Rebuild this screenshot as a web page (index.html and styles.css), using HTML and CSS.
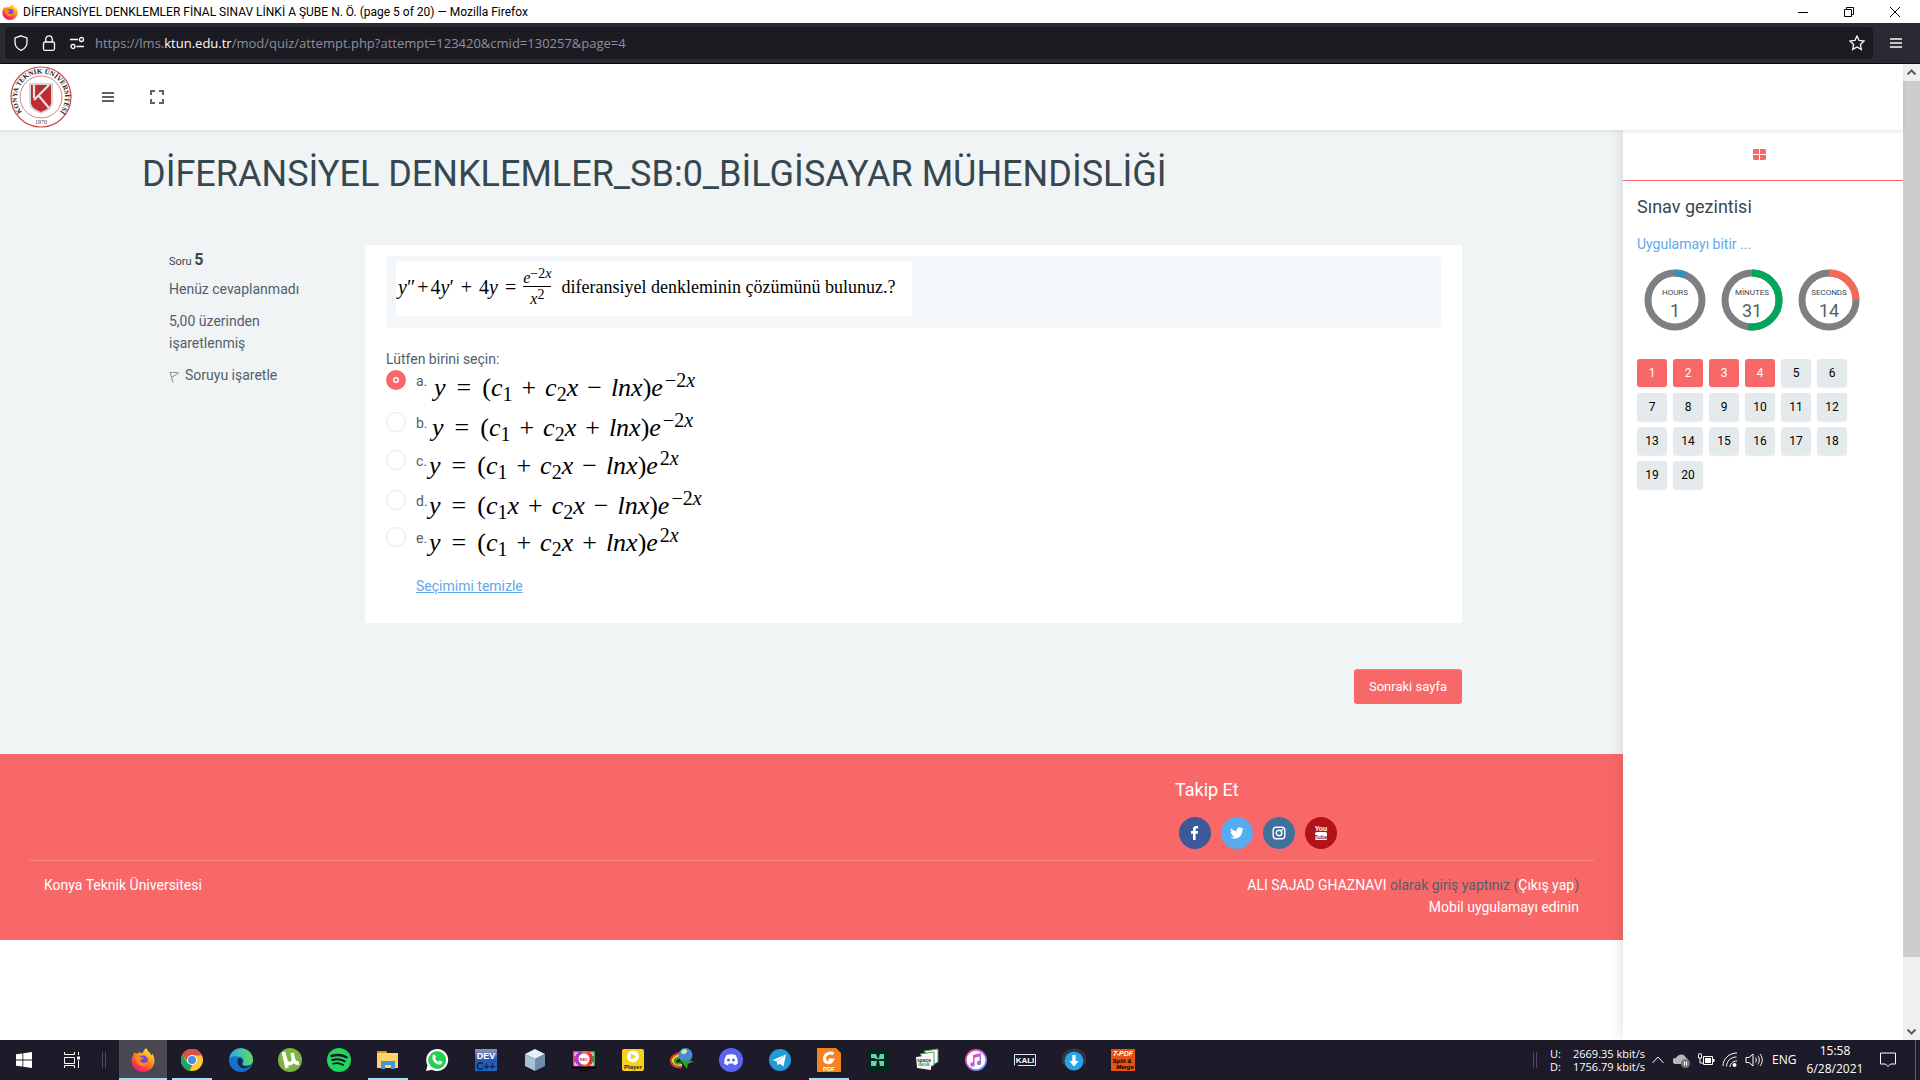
FILE: index.html
```html
<!DOCTYPE html>
<html lang="tr">
<head>
<meta charset="utf-8">
<title>DİFERANSİYEL DENKLEMLER FİNAL SINAV LİNKİ A ŞUBE N. Ö. (page 5 of 20)</title>
<link rel="stylesheet" href="styles.css">
</head>
<body>
<svg width="0" height="0" class="defs" aria-hidden="true">
  <defs>
    <linearGradient id="fox" x1="0.8" y1="0" x2="0.2" y2="1"><stop offset="0" stop-color="#fff44f"/><stop offset="0.4" stop-color="#ff980e"/><stop offset="0.75" stop-color="#ff3750"/><stop offset="1" stop-color="#e31587"/></linearGradient>
    <linearGradient id="edgeA" x1="0" y1="0" x2="1" y2="0"><stop offset="0" stop-color="#2aa9e8"/><stop offset="1" stop-color="#5fdc5a"/></linearGradient>
    <linearGradient id="tunes" x1="0" y1="0" x2="1" y2="1"><stop offset="0" stop-color="#f94a6e"/><stop offset="0.5" stop-color="#c25ae0"/><stop offset="1" stop-color="#2fb3f5"/></linearGradient>
    <linearGradient id="rec" x1="0" y1="0" x2="1" y2="0"><stop offset="0" stop-color="#f23a8c"/><stop offset="0.3" stop-color="#8a3fe0"/><stop offset="0.55" stop-color="#ff7a1a"/><stop offset="0.8" stop-color="#e8272f"/><stop offset="1" stop-color="#17b26a"/></linearGradient>
    <linearGradient id="dev" x1="0" y1="0" x2="0" y2="1"><stop offset="0" stop-color="#8b95b8"/><stop offset="0.5" stop-color="#2b57ae"/><stop offset="1" stop-color="#1766c9"/></linearGradient>
    <symbol id="firefox" viewBox="0 0 24 24">
      <path fill="url(#fox)" d="M2 8c.3-2 1-3 2-4 .2 1 .6 1.600 1.300 2C6.500 5 7.500 4.500 8.500 4.500c1 0 2.500.2 3.500.5 0-2 1.500-3.800 3.500-5 .3 2 1.500 3 3 4.500 1 1 1.500 2 1.800 3 .6-.4.900-1 1-1.700C22.600 8 23.500 10 23.500 12.800 23.500 19 18.500 24 12 24S.5 19 .5 12.800C.5 11 1 9.300 2 8z"/>
      <circle cx="12" cy="12.500" r="5" fill="#7542e5"/>
      <path fill="#ff8a16" d="M4 9c2-1 4.500-.5 5.500.5h3c0 1.500-2 2-3 2.500-.5 1.500 1 3.200 3.500 3 2-.2 3-1.500 4-1.300-.5 3-3 4.300-5.500 4.300C7 18 4 14 4 9z"/>
    </symbol>
  </defs>
</svg>

<header class="titlebar">
  <svg class="titlebar-logo" viewBox="0 0 24 24"><use href="#firefox"/></svg>
  <span class="titlebar-text">DİFERANSİYEL DENKLEMLER FİNAL SINAV LİNKİ A ŞUBE N. Ö. (page 5 of 20) — Mozilla Firefox</span>
  <button class="win-btn" aria-label="Minimize"><svg viewBox="0 0 10 10"><path d="M0 5.500h10"/></svg></button>
  <button class="win-btn" aria-label="Restore"><svg viewBox="0 0 10 10"><path d="M.5 2.500h7v7h-7zM2.500 2.500v-2h7v7h-2"/></svg></button>
  <button class="win-btn" aria-label="Close"><svg viewBox="0 0 10 10"><path d="M0 0l10 10M10 0L0 10"/></svg></button>
</header>

<div class="toolbar">
  <div class="address">
    <svg class="addr-icon" viewBox="0 0 16 16"><path d="M8 .8L14 3v4c0 4-2.500 7-6 8.400C4.500 14 2 11 2 7V3z"/></svg>
    <svg class="addr-icon" viewBox="0 0 16 16"><rect x="2.500" y="7" width="11" height="8.300" rx="1.500"/><path d="M4.800 7V4a3.200 3.200 0 0 1 6.400 0v3"/></svg>
    <svg class="addr-icon" viewBox="0 0 16 16"><path d="M1 4.500h8M7.500 11.500H15"/><circle cx="12.500" cy="4.500" r="2"/><circle cx="4" cy="11.500" r="2"/></svg>
    <div class="url" role="textbox" aria-label="Address">https://lms.<span class="url-host">ktun.edu.tr</span>/mod/quiz/attempt.php?attempt=123420&amp;cmid=130257&amp;page=4</div>
    <button class="tool-btn" aria-label="Bookmark"><svg viewBox="0 0 16 16"><path d="M8 1l2.100 4.500 4.900.6-3.600 3.400.9 4.900L8 12l-4.300 2.400.9-4.900L1 6.100l4.900-.6z"/></svg></button>
  </div>
  <button class="tool-btn menu-btn" aria-label="Menu"><svg viewBox="0 0 14 14"><path d="M1 3h12M1 7h12M1 11h12"/></svg></button>
</div>

<div class="viewport">
  <div class="page">
    <nav class="site-nav">
      <a href="#" class="brand" aria-label="Konya Teknik Üniversitesi">
        <svg viewBox="0 0 62 62">
          <circle cx="31" cy="31" r="30" fill="#fff" stroke="#cf4a4c" stroke-width="1.200"/>
          <circle cx="31" cy="31" r="21" fill="none" stroke="#d98284" stroke-width="1"/>
          <path id="ring" fill="none" d="M17 51A24 24 0 1 1 45 51"/>
          <text class="brand-ring"><textPath href="#ring" startOffset="50%" text-anchor="middle">KONYA TEKNİK ÜNİVERSİTESİ</textPath></text>
          <text class="brand-year" x="31" y="58" text-anchor="middle">1970</text>
          <path fill="#d5d5d7" d="M19 17h24v19c0 6-5 9-12 12-7-3-12-6-12-12z"/>
          <path fill="#bf2c30" d="M21 19h20v17c0 5-4 7.500-10 10-6-2.500-10-5-10-10z"/>
          <path fill="none" stroke="#e6e3e4" stroke-width="2.200" d="M39 19L24 34M24 19v13M29 30l10 12"/>
        </svg>
      </a>
      <button class="nav-btn" aria-label="Menü"><svg viewBox="0 0 14 14"><path d="M1 3h12M1 7h12M1 11h12"/></svg></button>
      <button class="nav-btn" aria-label="Tam ekran"><svg viewBox="0 0 14 14"><path d="M1 5V1h4M9 1h4v4M13 9v4H9M5 13H1V9"/></svg></button>
    </nav>

    <div class="columns">
      <div class="main">
        <main class="content">
          <h1>DİFERANSİYEL DENKLEMLER_SB:0_BİLGİSAYAR MÜHENDİSLİĞİ</h1>
          <div class="question">
            <aside class="info">
              <h2>Soru <b>5</b></h2>
              <p>Henüz cevaplanmadı</p>
              <p>5,00 üzerinden işaretlenmiş</p>
              <p><a href="#" class="flag"><svg viewBox="0 0 10 12"><path d="M1 1l3 10.500M1 1c2 1.500 3-.5 8.500 1L4 5.500 2.500 6"/></svg>Soruyu işaretle</a></p>
            </aside>
            <form class="card">
              <div class="prompt">
                <div class="prompt-math">
                  <span><i>y</i>″<span class="plus">+</span>4<i>y</i>′</span><span>+</span><span>4<i>y</i></span><span>=</span>
                  <span class="frac"><span class="frac-top"><i>e</i><sup>−2<i>x</i></sup></span><span class="frac-bottom"><i>x</i><sup>2</sup></span></span>
                  <span class="prompt-text">diferansiyel denkleminin çözümünü bulunuz.?</span>
                </div>
              </div>
              <fieldset>
                <legend>Lütfen birini seçin:</legend>
                <label class="choice choice-a"><input type="radio" name="q5" checked><span class="letter">a.</span><span class="math"><i>y</i><span class="eq">=</span>(<i>c</i><sub>1</sub><span class="op">+</span><i>c</i><sub>2</sub><i>x</i><span class="op">−</span><i>lnx</i>)<i>e</i><sup>−2<i>x</i></sup></span></label>
                <label class="choice choice-b"><input type="radio" name="q5"><span class="letter">b.</span><span class="math"><i>y</i><span class="eq">=</span>(<i>c</i><sub>1</sub><span class="op">+</span><i>c</i><sub>2</sub><i>x</i><span class="op">+</span><i>lnx</i>)<i>e</i><sup>−2<i>x</i></sup></span></label>
                <label class="choice choice-c"><input type="radio" name="q5"><span class="letter">c.</span><span class="math"><i>y</i><span class="eq">=</span>(<i>c</i><sub>1</sub><span class="op">+</span><i>c</i><sub>2</sub><i>x</i><span class="op">−</span><i>lnx</i>)<i>e</i><sup>2<i>x</i></sup></span></label>
                <label class="choice choice-d"><input type="radio" name="q5"><span class="letter">d.</span><span class="math"><i>y</i><span class="eq">=</span>(<i>c</i><sub>1</sub><i>x</i><span class="op">+</span><i>c</i><sub>2</sub><i>x</i><span class="op">−</span><i>lnx</i>)<i>e</i><sup>−2<i>x</i></sup></span></label>
                <label class="choice choice-e"><input type="radio" name="q5"><span class="letter">e.</span><span class="math"><i>y</i><span class="eq">=</span>(<i>c</i><sub>1</sub><span class="op">+</span><i>c</i><sub>2</sub><i>x</i><span class="op">+</span><i>lnx</i>)<i>e</i><sup>2<i>x</i></sup></span></label>
              </fieldset>
              <a href="#" class="clear">Seçimimi temizle</a>
            </form>
          </div>
          <div class="actions"><button class="next">Sonraki sayfa</button></div>
        </main>

        <footer class="footer">
          <div class="follow">
            <h3>Takip Et</h3>
            <div class="socials">
              <a href="#" class="social facebook" aria-label="Facebook"><svg viewBox="0 0 16 16"><path fill="#fff" d="M6 15V8.700H4V6h2V4.200C6 2.200 7.200 1 9.200 1c.9 0 1.700.1 1.900.1v2.300H9.800c-1 0-1.200.5-1.200 1.200V6h2.400l-.3 2.700H8.600V15z"/></svg></a>
              <a href="#" class="social twitter" aria-label="Twitter"><svg viewBox="0 0 16 16"><path fill="#fff" d="M14.700 3.800c-.4.600-.8 1.100-1.400 1.500.2 4.500-3.200 8.500-7.800 8.500-1.600 0-3-.5-4.200-1.200 1.500.1 2.900-.3 4-1.200-1.200 0-2.200-.8-2.600-1.900h1.200C2.500 9.200 1.600 8 1.600 6.700c.4.200.8.300 1.200.3C1.600 6.200 1.200 4.600 2 3.300c1.400 1.700 3.400 2.700 5.700 2.900C7.200 4 8.700 2.300 10.500 2.300c.8 0 1.500.3 2 .9.600-.1 1.200-.4 1.700-.7-.2.600-.6 1.200-1.200 1.500.6 0 1.100-.1 1.700-.2z"/></svg></a>
              <a href="#" class="social instagram" aria-label="Instagram"><svg viewBox="0 0 16 16"><g fill="none" stroke="#fff" stroke-width="1.400"><rect x="2.200" y="2.200" width="11.600" height="11.600" rx="3"/><circle cx="8" cy="8" r="2.800"/></g><circle cx="11.300" cy="4.700" r=".9" fill="#fff"/></svg></a>
              <a href="#" class="social youtube" aria-label="YouTube"><svg viewBox="0 0 16 16"><rect x="2" y="7" width="12" height="8" rx="1.500" fill="#fff"/><text class="yt-top" x="8" y="6" text-anchor="middle">You</text><text class="yt-bottom" x="8" y="13.500" text-anchor="middle">Tube</text></svg></a>
            </div>
          </div>
          <div class="footer-bottom">
            <a href="#">Konya Teknik Üniversitesi</a>
            <div class="login"><div><a href="#">ALI SAJAD GHAZNAVI</a> olarak giriş yaptınız (<a href="#">Çıkış yap</a>)</div><div><a href="#">Mobil uygulamayı edinin</a></div></div>
          </div>
        </footer>
      </div>

      <aside class="sidebar">
        <div class="tab"><button class="tab-btn" aria-label="Bloklar"><svg viewBox="0 0 13 11"><path fill="#f96868" d="M1 0h5v5H0V1zM7 0h5l1 1v4H7zM0 6h6v5H1l-1-1zM7 6h6v4l-1 1H7z"/></svg></button></div>
        <div class="sidebar-body">
          <h2>Sınav gezintisi</h2>
          <a href="#" class="finish">Uygulamayı bitir ...</a>
          <div class="timers">
            <div class="timer"><svg viewBox="0 0 62 62"><circle cx="31" cy="31" r="27"/><circle class="hours" cx="31" cy="31" r="27" pathLength="360" stroke-dasharray="23 360"/></svg><span class="unit">HOURS</span><span class="value">1</span></div>
            <div class="timer"><svg viewBox="0 0 62 62"><circle cx="31" cy="31" r="27"/><circle class="minutes" cx="31" cy="31" r="27" pathLength="360" stroke-dasharray="188 360"/></svg><span class="unit">MİNUTES</span><span class="value">31</span></div>
            <div class="timer"><svg viewBox="0 0 62 62"><circle cx="31" cy="31" r="27"/><circle class="seconds" cx="31" cy="31" r="27" pathLength="360" stroke-dasharray="90 360"/></svg><span class="unit">SECONDS</span><span class="value">14</span></div>
          </div>
          <nav class="pages">
            <a href="#" class="done">1</a><a href="#" class="done">2</a><a href="#" class="done">3</a><a href="#" class="done">4</a><a href="#">5</a><a href="#">6</a>
            <a href="#">7</a><a href="#">8</a><a href="#">9</a><a href="#">10</a><a href="#">11</a><a href="#">12</a>
            <a href="#">13</a><a href="#">14</a><a href="#">15</a><a href="#">16</a><a href="#">17</a><a href="#">18</a>
            <a href="#">19</a><a href="#">20</a>
          </nav>
        </div>
      </aside>
    </div>
  </div>
  <div class="scrollbar">
    <svg viewBox="0 0 17 17"><path d="M4.500 10.500l4-4 4 4"/></svg>
    <div class="track"><div class="thumb"></div></div>
    <svg viewBox="0 0 17 17"><path d="M4.500 6.500l4 4 4-4"/></svg>
  </div>
</div>

<div class="taskbar">
  <button class="task start" aria-label="Start"><svg viewBox="0 0 16 16"><path fill="#fff" d="M0 2.300L6.500 1.400v6.200H0zM7.300 1.300L16 0v7.600H7.300zM0 8.400h6.500v6.200L0 13.700zM7.300 8.400H16V16l-8.700-1.300z"/></svg></button>
  <button class="task start" aria-label="Task view"><svg viewBox="0 0 16 16"><path fill="none" stroke="#fff" d="M.5 0v2.500h10V0M.5 5.500h10v6H.5zM.5 16v-2.500h10V16M14.500 0v3M14.500 8.500V16"/><path fill="#fff" d="M13 4.500h3v3h-3z"/></svg></button>
  <span class="grip"></span>
  <div class="apps">
    <button class="task active open" aria-label="Firefox"><svg viewBox="0 0 24 24"><use href="#firefox"/></svg></button>
    <button class="task open" aria-label="Chrome"><svg viewBox="0 0 24 24"><circle cx="12" cy="12" r="11" fill="#fbc934"/><path fill="#dd5144" d="M2.500 6.500A11 11 0 0 1 22 7.500H12L8 14z"/><path fill="#1da362" d="M2.500 6.500l5 8.500 5 2-3 5.800A11 11 0 0 1 2.500 6.500z"/><circle cx="12" cy="12" r="5" fill="#fff"/><circle cx="12" cy="12" r="4" fill="#4a87ee"/></svg></button>
    <button class="task" aria-label="Edge"><svg viewBox="0 0 24 24"><circle cx="12" cy="12" r="12" fill="#1672c9"/><path fill="url(#edgeA)" d="M.2 10A12 12 0 0 1 24 12c0 4-3.500 5.500-7 5.500-2.500 0-3.500-1-3-2 1.500-2 1-6-3-6.800C7 7.800 2 8 .2 10z"/><path fill="#15254a" d="M10 10c3-.5 4.500 3 3 5-1.500 3 5 4.500 9 1.800-3 4-8 4.200-10 2.700-3-2-5-7.500-2-9.500z"/></svg></button>
    <button class="task" aria-label="uTorrent"><svg viewBox="0 0 24 24"><circle cx="12" cy="12" r="12" fill="#7cb342"/><path fill="none" stroke="#fff" stroke-width="3.600" d="M5.500 4l3.500 16M7 9c.5 4.500 2 7 5 6.500 3-.5 4-2.500 3-6.500l-.8-4M15.500 11c.6 3 2.500 4.500 5.500 4"/></svg></button>
    <button class="task" aria-label="Spotify"><svg viewBox="0 0 24 24"><circle cx="12" cy="12" r="12" fill="#1ed760"/><g fill="none" stroke="#14141c" stroke-linecap="round"><path stroke-width="2.400" d="M4.500 8c5-1.500 11-1 15 1.300"/><path stroke-width="2" d="M5.200 12c4.500-1.300 9-.8 12.600 1.300"/><path stroke-width="1.700" d="M6 15.700c4-1 7-.6 10.300 1.200"/></g></svg></button>
    <button class="task open" aria-label="Explorer"><svg viewBox="0 0 24 24"><path fill="#d99a1b" d="M1 3h9l2 3H1z"/><path fill="#ffd369" d="M1 5h21v15H1z"/><path fill="#3f95d8" d="M5 13h14v8h-4v-4H9v4H5z"/></svg></button>
    <button class="task" aria-label="WhatsApp"><svg viewBox="0 0 24 24"><path fill="#fff" d="M12 1a11 11 0 1 1-5 20.700L1 23l1.500-5.700A11 11 0 0 1 12 1z"/><circle cx="12.200" cy="12" r="9" fill="#25d050"/><path fill="#fff" d="M8 7l2-.3 1 2.500-1 1.300c.8 1.500 2 2.700 3.500 3.300l1.200-1.300 2.600 1.200c0 3-3 3.500-5.300 2.300C9 14.500 6 10.500 8 7z"/></svg></button>
    <button class="task" aria-label="Dev-C++"><svg viewBox="0 0 24 24"><path fill="url(#dev)" d="M1 1h22v22H1z"/><text class="ico-dev" x="12" y="11" text-anchor="middle">DEV</text><text class="ico-cpp" x="12" y="22" text-anchor="middle">C++</text></svg></button>
    <button class="task" aria-label="VirtualBox"><svg viewBox="0 0 24 24"><path fill="#e4f0f8" d="M12 1l10 5-10 5L2 6z"/><path fill="#a9c0d6" d="M2 6l10 5v12L2 18z"/><path fill="#6f8cab" d="M22 6l-10 5v12l10-5z"/></svg></button>
    <button class="task" aria-label="Recorder"><svg viewBox="0 0 24 24"><path fill="url(#rec)" d="M1 3h22v16H1z"/><circle cx="12" cy="11" r="5.500" fill="#fff"/><text class="ico-rec" x="12" y="13" text-anchor="middle">REC</text><path fill="none" stroke="#fff" d="M3 8V5h3M18 5h3v3M3 14v3h3M18 17h3v-3"/><path fill="#000" d="M0 18.500h24v2H0zM8 22h8v1H8z"/></svg></button>
    <button class="task" aria-label="Player"><svg viewBox="0 0 24 24"><rect x="1" y="1" width="22" height="22" rx="2" fill="#f4d218"/><circle cx="12" cy="8.500" r="6" fill="#fff"/><path fill="#f4d218" d="M10 5.500l5 3-5 3z"/><text class="ico-player" x="12" y="21" text-anchor="middle">Player</text></svg></button>
    <button class="task" aria-label="Download Manager"><svg viewBox="0 0 24 24"><g fill="none" stroke-width="2"><path stroke="#e8402a" d="M11 5C3 6 0 11 1 14s5 6 11 5"/><path stroke="#ffd91c" d="M11 7c-6 1-9 4-8 6.500s4 4 9 3.500"/><path stroke="#2fa83c" d="M11 9c-4 1-6 2-6 4.500s3 2.500 6 1.500"/></g><circle cx="15.500" cy="7" r="7" fill="#4c87d8"/><path fill="#d8e9a5" d="M12 2c3-2 6 0 5 2s-4 3-6 1z"/><path fill="#1da52c" d="M10 12l14 1-6 3-1 5z"/></svg></button>
    <button class="task" aria-label="Discord"><svg viewBox="0 0 24 24"><circle cx="12" cy="12" r="12" fill="#5865f2"/><path fill="#fff" d="M7.500 7c3-1 6-1 9 0 1.700 2.500 2.500 5.500 2.200 8.700-1.200.9-2.500 1.300-3.500 1.500l-1-1.600H9.800l-1 1.600c-1-.2-2.300-.6-3.500-1.500C5 12.500 5.800 9.500 7.500 7z"/><g fill="#5865f2"><circle cx="9.500" cy="12" r="1.600"/><circle cx="14.500" cy="12" r="1.600"/></g></svg></button>
    <button class="task" aria-label="Telegram"><svg viewBox="0 0 24 24"><circle cx="12" cy="12" r="11" fill="#229ad6"/><path fill="#fff" d="M4.500 12L18 6.500l-2.500 12-4-3-2 2-.7-4z"/><path stroke="#9fc9e4" d="M9 13.500L16 8"/></svg></button>
    <button class="task open" aria-label="Foxit PDF"><svg viewBox="0 0 24 24"><path fill="#f58220" d="M0 0h19l5 5v19H0z"/><path fill="none" stroke="#fff" stroke-width="3" d="M16.500 6c-3-2-9-.5-9 4.500s6 5.500 8 1.500h-4"/><text class="ico-pdf" x="12" y="22.500" text-anchor="middle">PDF</text></svg></button>
    <button class="task" aria-label="Camtasia"><svg viewBox="0 0 24 24"><rect x="1" y="1" width="22" height="22" rx="3" fill="#03271d"/><path fill="#66d6a4" d="M5 6h5l2 5h-2l-2-1H5zM14 6h4v5h-4l-2 1zM5 13h5l1-1-1 6H5zM14 13h4v5h-4l-1-5z"/></svg></button>
    <button class="task" aria-label="Spacedesk"><svg viewBox="0 0 24 24"><path fill="#fff" stroke="#4f9b57" d="M9 3l14-2v13l-4 2z"/><path fill="#fff" stroke="#4f9b57" d="M5 6l14-2v13l-4 2z"/><path fill="#f5f5f2" d="M1 9l15-2v15L2 20z"/><text class="ico-space" x="9" y="14" text-anchor="middle">space</text><text class="ico-space ico-desk" x="9" y="18" text-anchor="middle">desk</text></svg></button>
    <button class="task" aria-label="iTunes"><svg viewBox="0 0 24 24"><circle cx="12" cy="12" r="11" fill="url(#tunes)"/><circle cx="12" cy="12" r="9.300" fill="#fff"/><g fill="url(#tunes)"><path d="M9 7l8-2v10h-1.500V8.500l-5 1.200V17H9z"/><circle cx="8.500" cy="16.500" r="2.200"/><circle cx="15" cy="15" r="2.200"/></g></svg></button>
    <button class="task" aria-label="Kali"><svg viewBox="0 0 24 24"><path fill="none" stroke="#e4e4e8" d="M1.500 17.500V6.500h21v11H5"/><text class="ico-kali" x="12" y="15" text-anchor="middle">KALI</text></svg></button>
    <button class="task" aria-label="Downloader"><svg viewBox="0 0 24 24"><path fill="none" stroke="#34343c" stroke-width="3" d="M2 16C-1 6 6 2 12 2s13 4 10 14"/><circle cx="12" cy="13" r="9.500" fill="#28a3e4"/><path fill="#fff" d="M10.300 7h3.400v6h3L12 18.500 7.300 13h3z"/></svg></button>
    <button class="task" aria-label="7-PDF"><svg viewBox="0 0 24 24"><path fill="#e35312" d="M0 1h24v22H0z"/><text class="ico-seven" x="12" y="8" text-anchor="middle">7-PDF</text><text class="ico-split" x="11" y="15" text-anchor="middle">Split &amp;</text><text class="ico-split" x="14" y="21" text-anchor="middle">Merge</text></svg></button>
  </div>
  <div class="tray">
    <span class="grip"></span>
    <dl class="net"><dt>U:</dt><dd>2669.35 kbit/s</dd><dt>D:</dt><dd>1756.79 kbit/s</dd></dl>
    <svg class="tray-icon chevron" viewBox="0 0 12 18"><path d="M.5 12l5.500-6 5.500 6"/></svg>
    <svg class="tray-icon" viewBox="0 0 18 18"><path fill="#b7b7bb" stroke="none" d="M2 13a3 3 0 0 1 1-6C5 3 11 2 13 7c2 0 3 3 2 6z"/><circle cx="12.500" cy="12.500" r="4.500" fill="#77777c" stroke="none"/><path d="M11.500 10.500v4M13.500 10.500v4"/></svg>
    <svg class="tray-icon" viewBox="0 0 18 18"><path d="M6.500 5.500h9v8h-9z"/><path fill="#fff" stroke="none" d="M8 7h6v5H8zM16 8h1.500v3H16z"/><path d="M1.500 4v3h3V4M2 2v2M4 2v2M3 7v5h3"/></svg>
    <svg class="tray-icon" viewBox="0 0 18 18"><path d="M2 15C2 8 8 2 16 2M5.500 15.500c0-5 4-9.500 10-9.500M9 16c0-3 2.500-6 7-6"/><circle cx="13.500" cy="14" r="2" fill="#fff" stroke="none"/></svg>
    <svg class="tray-icon" viewBox="0 0 18 18"><path d="M1 6.500h3L8 3v12l-4-3.500H1zM10.500 6.500c1 1.500 1 3.500 0 5M12.800 4.800c2 2.500 2 6 0 8.500M15 3c3 3.500 3 8.500 0 12"/></svg>
    <span class="lang">ENG</span>
    <div class="clock"><div>15:58</div><div>6/28/2021</div></div>
    <button class="notify" aria-label="Notifications"><svg viewBox="0 0 18 18"><path d="M1.500 2h15v11h-5L9 15.500 6.500 13h-5z"/></svg></button>
    <span class="peek"></span>
  </div>
</div>
</body>
</html>
```
FILE: styles.css
```css
* { box-sizing: border-box; }
body { margin: 0; min-height: 100vh; display: flex; flex-direction: column; font-family: Roboto, sans-serif; font-size: 14px; line-height: 22px; color: #526069; background: #fff; }
h1, h2, h3, p, dl, dd, fieldset { margin: 0; padding: 0; border: 0; font-weight: 400; }
button { border: 0; padding: 0; background: none; font: inherit; color: inherit; display: flex; align-items: center; justify-content: center; }
a { color: inherit; text-decoration: none; }
svg { display: block; flex: none; }
.defs { position: absolute; }

/* Browser window */
.titlebar { height: 23px; display: flex; align-items: center; padding-right: 2px; font: 12px/16px Roboto, sans-serif; color: #000; }
.titlebar-logo { width: 16px; height: 16px; margin: 0 5px 0 2px; }
.titlebar-text { flex: 1; }
.win-btn { width: 46px; height: 20px; }
.win-btn svg { width: 10px; height: 10px; fill: none; stroke: #000; }
.toolbar { height: 41px; display: flex; align-items: center; padding: 0 1px 0 5px; background: #2b2a33; border-bottom: 1px solid #0c0c0d; }
.address { flex: 1; height: 32px; display: flex; align-items: center; gap: 12px; padding: 0 8px; background: #1c1b22; border-radius: 4px; }
.addr-icon { width: 16px; height: 16px; fill: none; stroke: #fbfbfe; stroke-width: 1.300; }
.url { flex: 1; margin-left: -2px; font: 13px/20px "Open Sans", sans-serif; color: #8f8f9d; }
.url-host { color: #fbfbfe; }
.tool-btn { width: 16px; height: 32px; }
.tool-btn svg { width: 16px; fill: none; stroke: #fbfbfe; stroke-width: 1.300; }
.menu-btn { width: 46px; }
.menu-btn svg { width: 14px; }

/* Page frame */
.viewport { flex: 1; display: flex; }
.page { flex: 1; display: flex; flex-direction: column; }
.site-nav { height: 66px; display: flex; align-items: center; gap: 20px; padding: 0 10px; background: #fff; box-shadow: 0 2px 4px rgba(0, 0, 0, .08); z-index: 2; position: relative; }
.brand { width: 62px; }
.brand svg { width: 62px; height: 62px; }
.brand-ring { font: bold 7px "Liberation Serif", serif; fill: #222; }
.brand-year { font: 6px "Liberation Serif", serif; fill: #444; }
.nav-btn { width: 32px; height: 32px; }
.nav-btn + .nav-btn { margin-left: -3px; }
.nav-btn svg { width: 14px; fill: none; stroke: #616161; stroke-width: 2; }
.columns { flex: 1; display: flex; }
.main { flex: 1; display: flex; flex-direction: column; }
.content { padding: 22px 161px 50px 142px; background: #f0f4f5; }
h1 { font-size: 36px; line-height: 44px; color: #37474f; }
.question { display: flex; margin-top: 49px; }
.info { width: 223px; padding: 3px 50px 0 27px; }
.info h2 { font-size: 11px; line-height: 24px; color: #37474f; }
.info h2 b { font-size: 16px; }
.info p { margin-top: 4px; }
.info p + p { margin-top: 10px; }
.flag { display: flex; align-items: center; gap: 6px; }
.flag svg { width: 10px; height: 12px; margin-top: 4px; fill: none; stroke: #858c90; }
.card { flex: 1; padding: 11px 21px 26px; background: #fff; }
.prompt { height: 72px; padding: 5px 10px; background: #f3f7f9; border-radius: 4px; }
.prompt-math { width: 516px; height: 55px; display: flex; align-items: center; gap: 7px; padding: 0 2px 4px; background: #fff; font: 20px/24px "Liberation Serif", serif; color: #000; white-space: nowrap; }
.prompt-text { margin-left: 3px; font-size: 18px; }
.plus { padding: 0 2px; }
.frac { display: flex; flex-direction: column; align-items: center; font-size: 16px; line-height: 16px; }
.frac sup { font-size: 14px; line-height: 1px; vertical-align: 5px; }
.frac-top { padding-top: 4px; border-bottom: 1px solid #000; }
.frac-bottom { padding-top: 4px; }
fieldset { margin-top: 20px; }
legend { padding: 0; }
.choice { display: flex; align-items: flex-start; }
.choice-a { height: 42px; }
.choice-b { height: 38px; }
.choice-c { height: 40px; }
.choice-d { height: 37px; }
.choice-e { height: 38px; }
.choice input { appearance: none; width: 20px; height: 20px; margin: 0 10px 0 0; border: 1px solid #e4eaec; border-radius: 50%; background: #fff; }
.choice input:checked { border: 7px solid #f96868; background: radial-gradient(circle, #f96868 1px, #fff 2px); }
.letter { min-width: 12px; margin-right: 1px; }
.choice-a .letter { margin-right: 6px; }
.choice-b .letter { margin-right: 4px; }
.math { font: 26px/32px "Liberation Serif", serif; color: #000; white-space: nowrap; }
.choice-a .math { padding-top: 2px; }
.math sub, .math sup { font-size: 20px; line-height: 1px; }
.math sub { vertical-align: -5px; }
.math sup { vertical-align: 9px; padding-left: 2px; }
.eq { padding: 0 11px; }
.op { padding: 0 9px; }
.clear { display: inline-block; margin: 10px 0 0 30px; color: #62a8ea; text-decoration: underline; }
.actions { display: flex; justify-content: flex-end; margin-top: 46px; }
.next { height: 35px; padding: 0 15px; background: #f96868; border-top: 1px solid #fa8080; border-radius: 3px; color: #fff; font-size: 13px; }

.footer { padding: 24px 29px 22px; background: #f96868; color: #526069; }
.footer a, .follow h3 { color: #fff; }
.follow { margin-left: 1146px; height: 82px; }
.follow h3 { font-size: 18px; line-height: 24px; }
.socials { display: flex; gap: 10px; padding: 15px 4px 0; }
.social { width: 32px; height: 32px; border-radius: 50%; display: flex; align-items: center; justify-content: center; }
.social svg { width: 16px; height: 16px; }
.facebook { background: #3b5998; }
.twitter { background: #55acee; }
.instagram { background: #3f729b; }
.youtube { background: #b31217; }
.yt-top { font: bold 7px "Liberation Sans Narrow", "Liberation Sans", sans-serif; fill: #fff; }
.yt-bottom { font: bold 6px "Liberation Sans Narrow", "Liberation Sans", sans-serif; fill: #b31217; }
.footer-bottom { display: flex; justify-content: space-between; padding: 13px 15px 0; border-top: 1px solid #fb8581; }
.login { text-align: right; }

/* Quiz navigation */
.sidebar { width: 280px; background: #fff; box-shadow: 0 0 14px rgba(0, 0, 0, .14); }
.tab { height: 51px; display: flex; align-items: center; justify-content: center; padding: 0 7px 2px 0; border-bottom: 1px solid #f96868; }
.tab-btn svg { width: 13px; height: 11px; }
.sidebar-body { padding: 14px; }
.sidebar-body h2 { font-size: 18px; line-height: 24px; color: #37474f; }
.finish { display: block; margin-top: 14px; color: #62a8ea; }
.timers { display: flex; gap: 15px; padding: 14px 7px 0; }
.timer { width: 62px; height: 62px; display: grid; grid-template-rows: 18px 11px 26px; justify-items: center; }
.timer svg { grid-area: 1 / 1; width: 62px; height: 62px; }
.timer circle { fill: none; stroke: #7d7f83; stroke-width: 7; transform: rotate(-90deg); transform-origin: center; }
.timer .hours { stroke: #3c8dbc; }
.timer .minutes { stroke: #00a65a; }
.timer .seconds { stroke: #f56954; }
.unit { grid-area: 2 / 1; font-size: 8px; line-height: 11px; color: #37474f; }
.value { grid-area: 3 / 1; font-size: 18px; line-height: 26px; }
.pages { display: grid; grid-template-columns: repeat(6, 30px); gap: 6px; margin-top: 28px; }
.pages a { height: 28px; border-radius: 3px; background: #e4eaec; box-shadow: 0 1px 1px rgba(0, 0, 0, .08); color: #000; font-size: 12px; line-height: 28px; text-align: center; }
.pages .done { background: #f96868; color: #fff; }

.scrollbar { width: 17px; display: flex; flex-direction: column; background: #f0f0f0; }
.scrollbar svg { width: 17px; height: 17px; fill: none; stroke: #606060; stroke-width: 2; }
.track { flex: 1; }
.thumb { height: 93%; background: #cdcdcd; }

/* Desktop taskbar */
.taskbar { height: 40px; display: flex; background: #1d1b29; color: #fff; font: 12px/16px "Open Sans", sans-serif; }
.task { width: 48px; height: 40px; border-bottom: 2px solid transparent; padding-top: 2px; }
.task svg { width: 24px; height: 24px; overflow: visible; }
.start svg { width: 16px; height: 16px; }
.grip { align-self: center; width: 4px; height: 16px; margin: 0 13px 0 6px; border: solid #4c4b57; border-width: 0 1px; }
.apps { display: flex; gap: 1px; }
.open { width: 40px; margin: 0 4px; border-color: #a6dcfa; }
.active { width: 48px; margin: 0; background: #4a4953; }
.ico-dev { font: bold 9px "Liberation Sans", sans-serif; fill: #fff; }
.ico-cpp { font: bold 10px "Liberation Sans", sans-serif; fill: #0d2348; }
.ico-rec { font: bold 4px "Liberation Sans", sans-serif; fill: #e8272f; }
.ico-player { font: bold 6px "Liberation Sans", sans-serif; fill: #222; }
.ico-pdf { font: bold 6px "Liberation Sans", sans-serif; fill: #fff; }
.ico-space { font: bold 5px "Liberation Sans", sans-serif; fill: #333; }
.ico-desk { fill: #3a9a48; }
.ico-kali { font: bold 8px "Liberation Sans", sans-serif; fill: #fff; }
.ico-seven { font: italic bold 7px "Liberation Sans", sans-serif; fill: #fff; }
.ico-split { font: italic bold 6px "Liberation Sans", sans-serif; fill: #000; }
.tray { display: flex; align-items: center; margin-left: auto; }
.net { display: grid; grid-template-columns: 23px 72px; line-height: 13px; white-space: nowrap; font-size: 11px; }
.tray-icon, .notify svg { width: 18px; height: 18px; margin-left: 6px; fill: none; stroke: #fff; stroke-width: 1; }
.chevron { width: 12px; margin: 0 3px 0 7px; }
.lang { width: 24px; margin: 0 9px; }
.clock { width: 60px; line-height: 18px; text-align: center; }
.notify { margin: 0 18px 0 8px; }
.peek { width: 5px; height: 40px; border-left: 1px solid #5b5a66; }
```
